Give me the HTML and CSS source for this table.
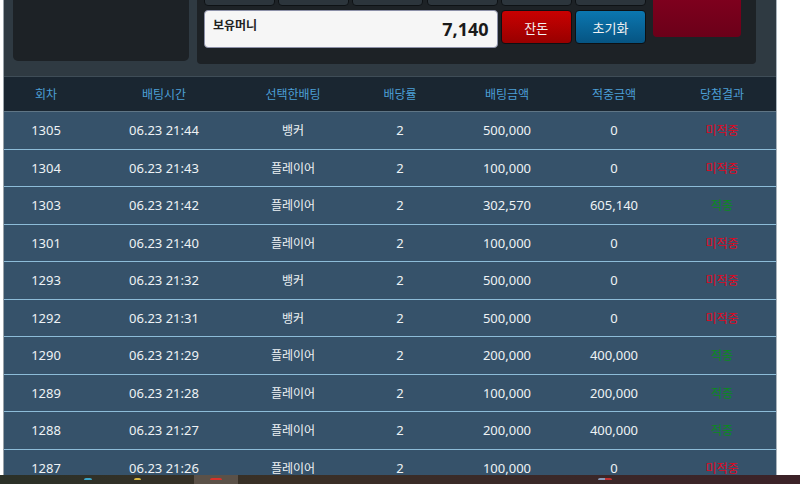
FILE: index.html
```html
<!DOCTYPE html>
<html lang="ko">
<head>
  <meta charset="UTF-8">
  <meta name="viewport" content="width=device-width, initial-scale=1.0">
  <title>배팅내역</title>
  <link rel="stylesheet" href="styles.css">
</head>
<body>
  <div class="page">
    <div class="panel">
      <div class="panel-left"></div>
      <div class="panel-right">
        <div class="chip"></div>
        <div class="chip"></div>
        <div class="chip"></div>
        <div class="chip"></div>
        <div class="chip"></div>
        <div class="chip"></div>
        <div class="bet-box"></div>
        <div class="money">
          <span class="money-label">보유머니</span>
          <span class="money-value">7,140</span>
        </div>
        <button class="btn btn-red">잔돈</button>
        <button class="btn btn-blue">초기화</button>
      </div>
    </div>

    <table class="history">
      <colgroup>
        <col style="width:84px">
        <col style="width:152px">
        <col style="width:106px">
        <col style="width:108px">
        <col style="width:106px">
        <col style="width:108px">
        <col style="width:108px">
      </colgroup>
      <thead>
        <tr>
          <th>회차</th>
          <th>배팅시간</th>
          <th>선택한배팅</th>
          <th>배당률</th>
          <th>배팅금액</th>
          <th>적중금액</th>
          <th>당첨결과</th>
        </tr>
      </thead>
      <tbody id="rows"></tbody>
    </table>
  </div>

  <div class="taskbar">
    <span class="tb-icon tb-blue"></span>
    <span class="tb-icon tb-yellow"></span>
    <span class="tb-active"><span class="tb-icon tb-red"></span></span>
    <span class="tb-icon tb-tray"></span>
  </div>

<script>
const history = [
  ['1305', '06.23 21:44', '뱅커', '2', '500,000', '0', false],
  ['1304', '06.23 21:43', '플레이어', '2', '100,000', '0', false],
  ['1303', '06.23 21:42', '플레이어', '2', '302,570', '605,140', true],
  ['1301', '06.23 21:40', '플레이어', '2', '100,000', '0', false],
  ['1293', '06.23 21:32', '뱅커', '2', '500,000', '0', false],
  ['1292', '06.23 21:31', '뱅커', '2', '500,000', '0', false],
  ['1290', '06.23 21:29', '플레이어', '2', '200,000', '400,000', true],
  ['1289', '06.23 21:28', '플레이어', '2', '100,000', '200,000', true],
  ['1288', '06.23 21:27', '플레이어', '2', '200,000', '400,000', true],
  ['1287', '06.23 21:26', '플레이어', '2', '100,000', '0', false]
];

const tbody = document.getElementById('rows');
history.forEach(r => {
  const tr = document.createElement('tr');
  tr.innerHTML =
    '<td>' + r[0] + '</td>' +
    '<td>' + r[1] + '</td>' +
    '<td class="ko">' + r[2] + '</td>' +
    '<td>' + r[3] + '</td>' +
    '<td>' + r[4] + '</td>' +
    '<td>' + r[5] + '</td>' +
    '<td class="ko ' + (r[6] ? 'win' : 'lose') + '">' + (r[6] ? '적중' : '미적중') + '</td>';
  tbody.appendChild(tr);
});
</script>
</body>
</html>
```

FILE: styles.css
```css
body {
  margin: 0;
  background: #fff;
  font-family: "Noto Sans", "Noto Sans CJK KR", sans-serif;
  overflow: hidden;
  height: 484px;
}
.page {
  width: 772px;
  margin: -40px 0 0 3px;
  border-left: 1px solid #9aa3aa;
  border-right: 1px solid #aab4bc;
}
.panel {
  height: 116px;
  background: #2f3a42;
  border-bottom: 1px solid #3f4d57;
  display: flex;
  gap: 8px;
  padding-left: 9px;
}
.panel-left {
  width: 176px;
  height: 101px;
  background: #1d2226;
  border-radius: 0 0 5px 5px;
}
.panel-right {
  width: 545px;
  height: 78px;
  padding: 26px 7px 0;
  background: #1d2226;
  border-radius: 0 0 4px 4px;
  display: grid;
  grid-template-columns: repeat(6, 71px) 92px;
  grid-template-rows: 20px 38px;
  column-gap: 3.2px;
  row-gap: 4px;
}
.chip {
  background: #2c353c;
  border: 1px solid #0e1215;
  border-radius: 4px;
}
.bet-box {
  grid-column: 7;
  grid-row: 1 / span 2;
  margin-left: 4px;
  height: 51px;
  background: linear-gradient(#85001f, #6b0019);
  border-radius: 0 0 4px 4px;
}
.money {
  grid-column: 1 / span 4;
  background: #f6f6f6;
  border: 1px solid #8c90a8;
  border-radius: 4px;
  display: flex;
  justify-content: space-between;
  align-items: flex-start;
  padding: 6px 8px;
}
.money-label {
  font-size: 12px;
  font-weight: bold;
  color: #222;
  line-height: 18px;
}
.money-value {
  font-size: 18px;
  font-weight: bold;
  color: #1a1a1a;
  line-height: 24px;
}
.btn {
  height: 34px;
  border: 1px solid #0d1013;
  border-radius: 4px;
  color: #f2f2f2;
  font-family: inherit;
  font-size: 13px;
  padding: 0;
  cursor: pointer;
}
.btn-red {
  background: linear-gradient(#c90101, #980000);
}
.btn-blue {
  background: linear-gradient(#0b77b0, #065482);
}
.history {
  width: 772px;
  table-layout: fixed;
  border-collapse: collapse;
}
.history th {
  height: 34px;
  padding: 0;
  background: #1a2631;
  color: #4c9fd6;
  font-size: 12px;
  font-weight: normal;
  border-bottom: 1px solid #5f7585;
}
.history td {
  height: 36.5px;
  padding: 0;
  background: #36526a;
  color: #eef2f5;
  font-size: 13px;
  text-align: center;
  border-bottom: 1px solid #8dbcd8;
}
.history td.ko {
  font-size: 12px;
}
.history td.lose {
  color: #e0061e;
}
.history td.win {
  color: #0b8a20;
}
.taskbar {
  position: fixed;
  left: 0;
  right: 0;
  bottom: 0;
  height: 9px;
  display: flex;
  align-items: flex-start;
  background: linear-gradient(90deg, #2b3128 0%, #3a3026 35%, #3a2a28 60%, #3c2228 100%);
}
.tb-icon {
  display: block;
  height: 2px;
  margin-top: 3px;
  border-radius: 3px 3px 0 0;
}
.tb-blue {
  width: 8px;
  margin-left: 84px;
  background: #3ba6c8;
}
.tb-yellow {
  width: 7px;
  margin-left: 42px;
  background: #d8b840;
}
.tb-active {
  display: flex;
  justify-content: center;
  width: 44px;
  height: 9px;
  margin-left: 53px;
  background: #5b5148;
}
.tb-red {
  width: 12px;
  background: #d8322a;
}
.tb-tray {
  width: 14px;
  margin-left: 360px;
  background: linear-gradient(90deg, #8a9ab8 50%, #c03030 50%);
}
```
